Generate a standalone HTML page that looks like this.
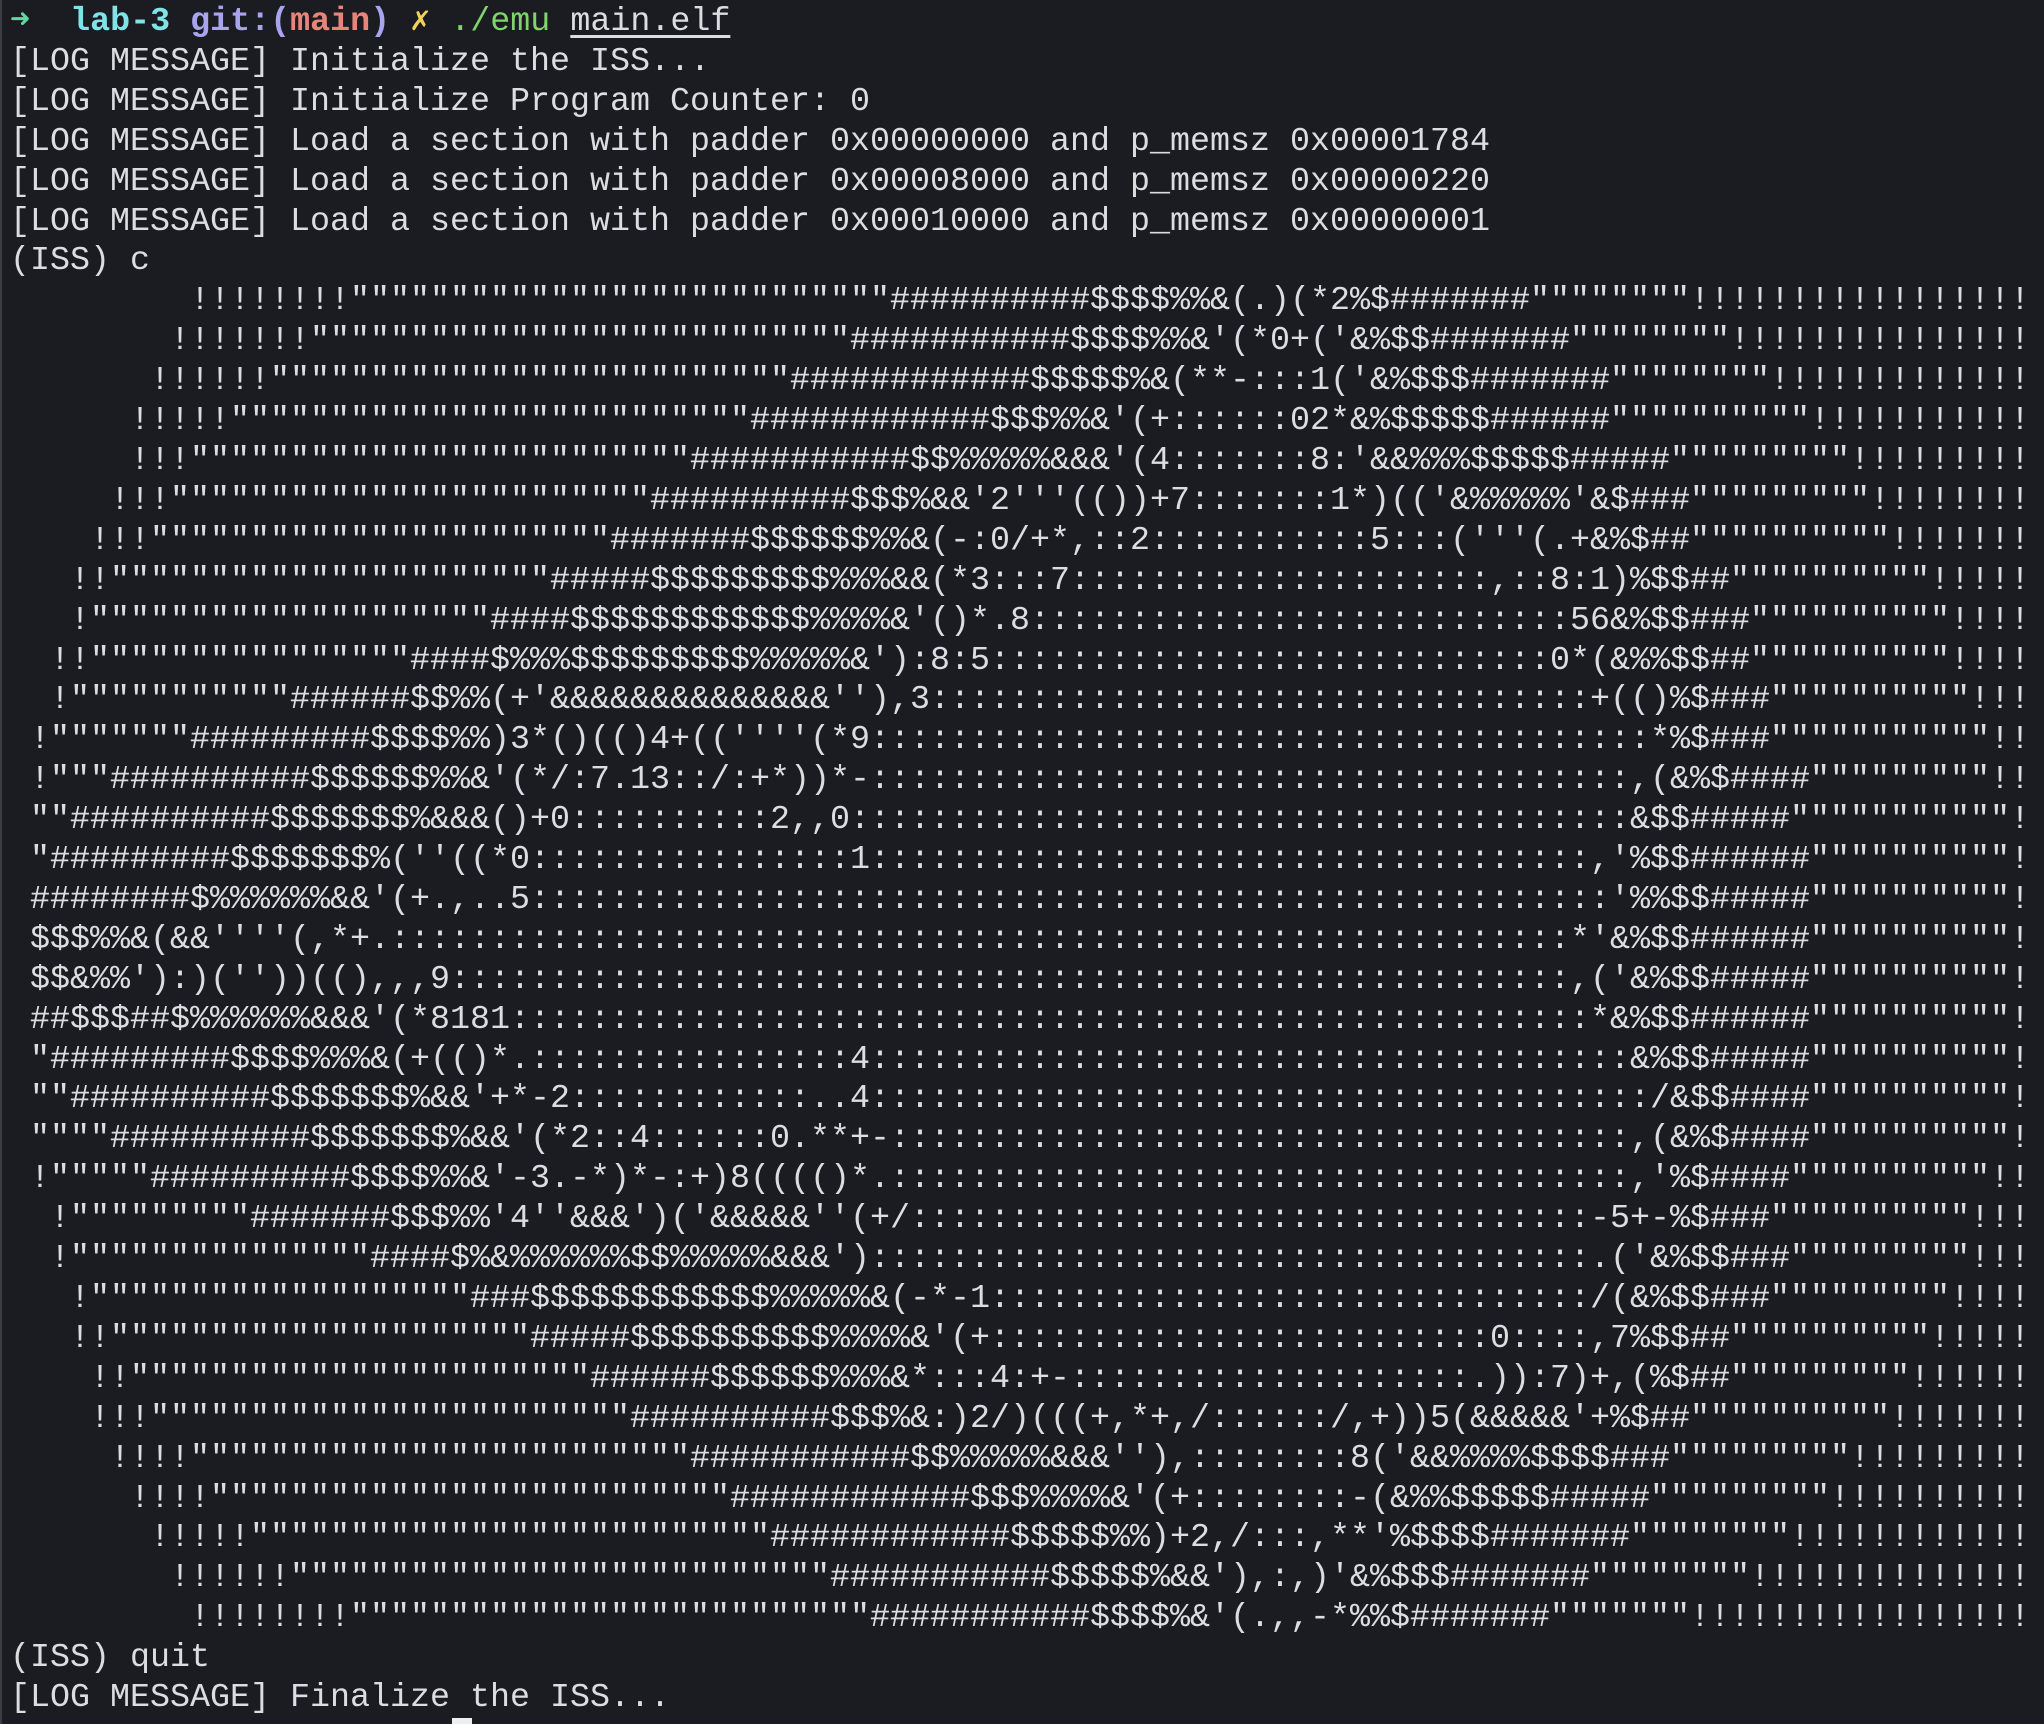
<!DOCTYPE html>
<html><head><meta charset="utf-8"><style>
html,body{margin:0;padding:0;background:#1a1c21;width:2044px;height:1724px;overflow:hidden;}
body{border-left:2px solid #3a3d44;box-sizing:border-box;position:relative;}
pre{margin:0;padding:3px 0 0 8px;font-family:"Liberation Mono","DejaVu Sans Mono",monospace;font-size:33.33px;line-height:39.9px;color:#dcdde0;white-space:pre;}
.ar{color:#5fd7a0;font-weight:bold}
.c{color:#7fe3e8;font-weight:bold}
.b{color:#a9a4f0;font-weight:bold}
.r{color:#e8857a;font-weight:bold}
.y{color:#f2d25a}
.g{color:#7fd46a}
.u{text-decoration:underline;text-underline-offset:5px}
.cur{position:absolute;left:450px;top:1718px;width:20px;height:6px;background:#eee}
</style></head><body><pre><span class="ar">➜</span>  <span class="c">lab-3</span> <span class="b">git:(</span><span class="r">main</span><span class="b">)</span> <span class="y">✗</span> <span class="g">./emu</span> <span class="u">main.elf</span>
[LOG MESSAGE] Initialize the ISS...
[LOG MESSAGE] Initialize Program Counter: 0
[LOG MESSAGE] Load a section with padder 0x00000000 and p_memsz 0x00001784
[LOG MESSAGE] Load a section with padder 0x00008000 and p_memsz 0x00000220
[LOG MESSAGE] Load a section with padder 0x00010000 and p_memsz 0x00000001
(ISS) c
         !!!!!!!!"""""""""""""""""""""""""""##########$$$$%%&(.)(*2%$#######""""""""!!!!!!!!!!!!!!!!!
        !!!!!!!"""""""""""""""""""""""""""###########$$$$%%&'(*0+('&%$$#######""""""""!!!!!!!!!!!!!!!
       !!!!!!""""""""""""""""""""""""""############$$$$$%&(**-:::1('&%$$$#######""""""""!!!!!!!!!!!!!
      !!!!!""""""""""""""""""""""""""############$$$%%&'(+::::::02*&%$$$$$######""""""""""!!!!!!!!!!!
      !!!"""""""""""""""""""""""""###########$$%%%%%&&&'(4:::::::8:'&&%%%$$$$$#####"""""""""!!!!!!!!!
     !!!""""""""""""""""""""""""##########$$$%&&'2'''(())+7:::::::1*)(('&%%%%%'&$###"""""""""!!!!!!!!
    !!!"""""""""""""""""""""""#######$$$$$$%%&(-:0/+*,::2:::::::::::5:::('''(.+&%$##""""""""""!!!!!!!
   !!""""""""""""""""""""""#####$$$$$$$$$%%%&&(*3:::7:::::::::::::::::::::,::8:1)%$$##""""""""""!!!!!
   !""""""""""""""""""""####$$$$$$$$$$$$%%%%&'()*.8:::::::::::::::::::::::::::56&%$$###""""""""""!!!!
  !!""""""""""""""""####$%%%$$$$$$$$$%%%%%&'):8:5::::::::::::::::::::::::::::0*(&%%$$##""""""""""!!!!
  !"""""""""""######$$%%(+'&&&&&&&&&&&&&&''),3:::::::::::::::::::::::::::::::::+(()%$###""""""""""!!!
 !"""""""#########$$$$%%)3*()(()4+((''''(*9:::::::::::::::::::::::::::::::::::::::*%$###"""""""""""!!
 !"""##########$$$$$$%%&'(*/:7.13::/:+*))*-::::::::::::::::::::::::::::::::::::::,(&%$####"""""""""!!
 ""##########$$$$$$$%&&&()+0::::::::::2,,0:::::::::::::::::::::::::::::::::::::::&$$#####"""""""""""!
 "#########$$$$$$$%(''((*0::::::::::::::::1::::::::::::::::::::::::::::::::::::,'%$$######""""""""""!
 ########$%%%%%%&&'(+.,..5::::::::::::::::::::::::::::::::::::::::::::::::::::::'%%$$#####""""""""""!
 $$$%%&(&&''''(,*+.:::::::::::::::::::::::::::::::::::::::::::::::::::::::::::*'&%$$######""""""""""!
 $$&%%'):)(''))((),,,9::::::::::::::::::::::::::::::::::::::::::::::::::::::::,('&%$$#####""""""""""!
 ##$$$##$%%%%%%&&&'(*8181::::::::::::::::::::::::::::::::::::::::::::::::::::::*&%$$######""""""""""!
 "#########$$$$%%%&(+(()*.::::::::::::::::4::::::::::::::::::::::::::::::::::::::&%$$#####""""""""""!
 ""##########$$$$$$$%&&'+*-2::::::::::::..4:::::::::::::::::::::::::::::::::::::::/&$$####""""""""""!
 """"##########$$$$$$$%&&'(*2::4::::::0.**+-:::::::::::::::::::::::::::::::::::::,(&%$####""""""""""!
 !"""""##########$$$$%%&'-3.-*)*-:+)8(((()*.:::::::::::::::::::::::::::::::::::::,'%$####""""""""""!!
  !"""""""""#######$$$%%'4''&&&')('&&&&&''(+/::::::::::::::::::::::::::::::::::-5+-%$###""""""""""!!!
  !"""""""""""""""####$%&%%%%%%$$%%%%%&&&')::::::::::::::::::::::::::::::::::::.('&%$$###"""""""""!!!
   !"""""""""""""""""""###$$$$$$$$$$$$%%%%%&(-*-1::::::::::::::::::::::::::::::/(&%$$###"""""""""!!!!
   !!"""""""""""""""""""""#####$$$$$$$$$$%%%%&'(+:::::::::::::::::::::::::0::::,7%$$##""""""""""!!!!!
    !!"""""""""""""""""""""""######$$$$$$%%%&*:::4:+-::::::::::::::::::::.)):7)+,(%$##"""""""""!!!!!!
    !!!""""""""""""""""""""""""##########$$$%&:)2/)(((+,*+,/::::::/,+))5(&&&&&'+%$##""""""""""!!!!!!!
     !!!!"""""""""""""""""""""""""###########$$%%%%%&&&''),::::::::8('&&%%%%$$$$###"""""""""!!!!!!!!!
      !!!!""""""""""""""""""""""""""############$$$%%%%&'(+::::::::-(&%%$$$$$#####"""""""""!!!!!!!!!!
       !!!!!""""""""""""""""""""""""""############$$$$$%%)+2,/:::,**'%$$$$#######""""""""!!!!!!!!!!!!
        !!!!!!"""""""""""""""""""""""""""###########$$$$$%&&'),:,)'&%$$$#######""""""""!!!!!!!!!!!!!!
         !!!!!!!!""""""""""""""""""""""""""###########$$$$%&'(.,,-*%%$#######"""""""!!!!!!!!!!!!!!!!!
(ISS) quit
[LOG MESSAGE] Finalize the ISS...</pre><div class="cur"></div></body></html>
